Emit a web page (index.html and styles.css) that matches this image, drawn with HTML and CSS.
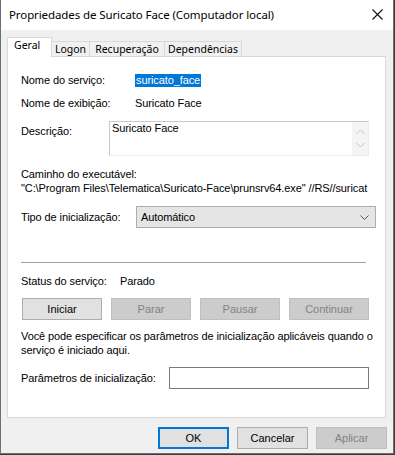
FILE: index.html
```html
<!DOCTYPE html>
<html lang="pt-BR">
<head>
  <meta charset="UTF-8">
  <title>Propriedades de Suricato Face</title>
  <link rel="stylesheet" href="styles.css">
</head>
<body>

<div class="window">
  <div class="titlebar">
    <span class="title">Propriedades de Suricato Face (Computador local)</span>
    <svg class="close" width="11" height="11" viewBox="0 0 11 11" aria-label="Fechar">
      <path d="M0.5 0.5 L10.5 10.5 M10.5 0.5 L0.5 10.5" stroke="#111" stroke-width="1.1" fill="none"/>
    </svg>
  </div>

  <div class="tabs">
    <div class="tab active">Geral</div>
    <div class="tab">Logon</div>
    <div class="tab">Recuperação</div>
    <div class="tab">Dependências</div>
  </div>

  <div class="panel">
    <div class="row r-name">
      <span class="label">Nome do serviço:</span>
      <span class="value"><span class="sel">suricato_face</span></span>
    </div>
    <div class="row r-display">
      <span class="label">Nome de exibição:</span>
      <span class="value">Suricato Face</span>
    </div>
    <div class="row r-desc">
      <span class="label lbl-desc">Descrição:</span>
      <div class="textarea">
        <span class="ta-text">Suricato Face</span>
        <div class="scroll">
          <svg width="9" height="6" viewBox="0 0 9 6"><path d="M0.5 5 L4.5 1 L8.5 5" stroke="#c4c4c4" fill="none"/></svg>
          <svg width="9" height="6" viewBox="0 0 9 6"><path d="M0.5 1 L4.5 5 L8.5 1" stroke="#c4c4c4" fill="none"/></svg>
        </div>
      </div>
    </div>
    <div class="line r-path-label">Caminho do executável:</div>
    <div class="line path">"C:\Program Files\Telematica\Suricato-Face\prunsrv64.exe" //RS//suricat</div>
    <div class="row r-type">
      <span class="label">Tipo de inicialização:</span>
      <div class="select">
        <span>Automático</span>
        <svg width="9" height="5" viewBox="0 0 9 5"><path d="M0.5 0.5 L4.5 4.5 L8.5 0.5" stroke="#555" fill="none"/></svg>
      </div>
    </div>

    <div class="separator"></div>

    <div class="row r-status">
      <span class="label lbl-status">Status do serviço:</span>
      <span>Parado</span>
    </div>
    <div class="actions">
      <button class="btn">Iniciar</button>
      <button class="btn" disabled>Parar</button>
      <button class="btn" disabled>Pausar</button>
      <button class="btn" disabled>Continuar</button>
    </div>
    <p class="hint">Você pode especificar os parâmetros de inicialização aplicáveis quando o<br>serviço é iniciado aqui.</p>
    <div class="row r-params">
      <span class="label lbl-params">Parâmetros de inicialização:</span>
      <div class="input"></div>
    </div>
  </div>

  <div class="footer">
    <button class="btn dlg default">OK</button>
    <button class="btn dlg">Cancelar</button>
    <button class="btn dlg" disabled>Aplicar</button>
  </div>
</div>

</body>
</html>
```

FILE: styles.css
```css
:root {
  --win-bg:   #f0f0f0;
  --border:   #d9d9d9;
  --text:     #000;
  --btn-bg:   #e1e1e1;
  --btn-bd:   #adadad;
  --dis-bg:   #cccccc;
  --dis-bd:   #bfbfbf;
  --dis-text: #838383;
  --accent:   #0078d7;
}

* { box-sizing: border-box; }

body {
  margin: 0;
  background: #3b3b3b;
  font-family: 'Liberation Sans', Arial, sans-serif;
  font-size: 11px;
  letter-spacing: -0.1px;
  color: var(--text);
}

.window {
  width: 394px; height: 454px;
  background: var(--win-bg);
  border: 1px solid #6f6f6f;
  border-top: none;
  display: flex; flex-direction: column;
}

.titlebar {
  height: 30px;
  background: #fff;
  display: flex; align-items: center;
  justify-content: space-between;
  padding: 0 9px 1px 8px;
  flex-shrink: 0;
}

.title {
  font-family: 'Noto Sans', 'Open Sans', sans-serif;
  font-size: 11.5px;
}

.close { margin-right: 1px; }

.tabs {
  display: flex; align-items: flex-end;
  margin: 7px 0 0 6px;
  height: 19px;
  position: relative; z-index: 1;
}

.tab {
  height: 15px;
  border: 1px solid var(--border);
  border-bottom: none;
  border-left: none;
  background: var(--win-bg);
  font-family: 'Noto Sans', 'Open Sans', sans-serif;
  font-size: 10.5px;
  letter-spacing: 0;
  line-height: 14px;
  text-align: center;
  white-space: nowrap;
}

.tab.active {
  height: 20px;
  margin-bottom: -1px;
  border-left: 1px solid var(--border);
  background: #fff;
  line-height: 15px;
  width: 45px;
  text-align: left;
  padding-left: 6px;
}

.tab:nth-child(2) { width: 38px; }
.tab:nth-child(3) { width: 75px; }
.tab:nth-child(4) { width: 77px; }

.panel {
  margin-left: 6px;
  width: 379px; height: 362px;
  background: #fff;
  border: 1px solid var(--border);
  padding: 16px 0 0 13px;
  flex-shrink: 0;
}

.row { display: flex; align-items: center; }
.line, .row, .label, .value { line-height: 14px; }

.label { width: 114px; flex-shrink: 0; }

.sel {
  background: var(--accent);
  color: #fff;
  padding: 0 1px;
  display: inline-block;
  line-height: 13px;
}

.r-display { margin-top: 9px; }

.r-desc { margin-top: 11px; align-items: flex-start; }
.lbl-desc { width: 88px; padding-top: 3px; }

.textarea {
  width: 260px; height: 35px;
  border: 1px solid #c9c9c9;
  border-right-color: #ececec;
  border-bottom-color: #ececec;
  display: flex; justify-content: space-between;
  padding-left: 2px;
}

.ta-text { line-height: 13px; }

.scroll {
  width: 16px;
  background: #f4f4f4;
  display: flex; flex-direction: column;
  align-items: center; justify-content: space-around;
  padding: 3px 0;
}

.r-path-label { margin-top: 11px; }
.path { white-space: nowrap; width: 348px; }

.r-type { margin-top: 11px; }
.r-type .label { width: 115px; }

.select {
  width: 240px; height: 22px;
  background: #e5e5e5;
  border: 1px solid var(--btn-bd);
  display: flex; align-items: center;
  justify-content: space-between;
  padding: 0 6px 0 4px;
}

.separator {
  width: 345px; height: 2px;
  margin-top: 34px;
  border-top: 1px solid #a0a0a0;
  border-bottom: 1px solid #fff;
}

.r-status { margin-top: 10px; }
.lbl-status { width: 99px; }

.actions {
  width: 347px;
  margin: 10px 0 0 1px;
  display: flex; justify-content: space-between;
}

.btn {
  width: 80px; height: 22px;
  background: var(--btn-bg);
  border: 1px solid var(--btn-bd);
  font: inherit;
  color: var(--text);
  padding: 0;
}

.btn:disabled {
  background: var(--dis-bg);
  border-color: var(--dis-bd);
  color: var(--dis-text);
}

.hint {
  margin: 9px 0 0;
  white-space: nowrap;
  line-height: 14px;
}

.r-params { margin-top: 10px; }
.lbl-params { width: 148px; }

.input {
  width: 200px; height: 22px;
  border: 1px solid #7a7a7a;
  background: #fff;
}

.footer {
  display: flex; justify-content: flex-end;
  gap: 8px;
  padding: 9px 6px 0 0;
}

.btn.dlg { width: 71px; }

.btn.default {
  border: 2px solid var(--accent);
}
```
